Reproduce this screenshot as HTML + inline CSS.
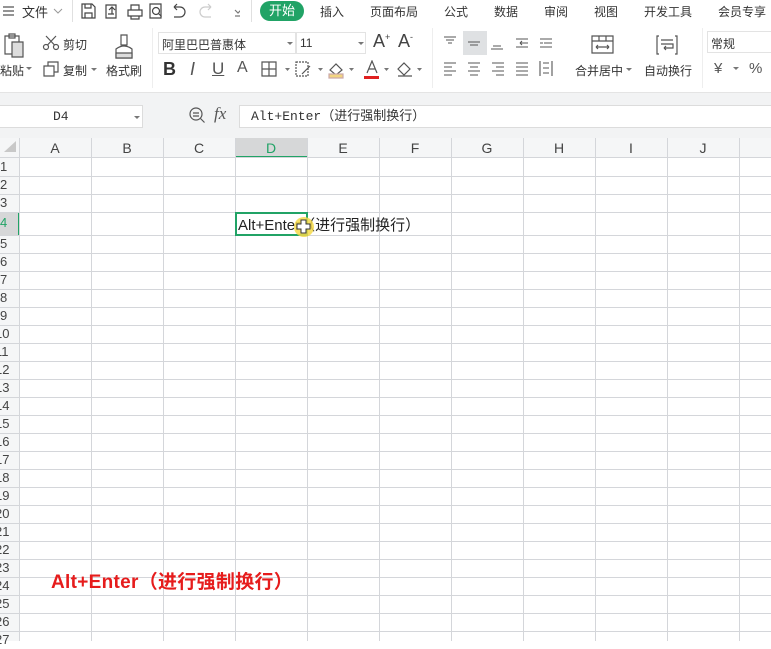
<!DOCTYPE html>
<html><head><meta charset="utf-8"><style>
*{margin:0;padding:0;box-sizing:border-box}
body{width:771px;height:641px;overflow:hidden;background:#fff;font-family:"Liberation Sans","Noto Sans CJK SC",sans-serif;font-size:12px;color:#333;position:relative}
.a{position:absolute;white-space:nowrap}
.ic{position:absolute}
.col{position:absolute;top:138px;height:20px;line-height:20px;text-align:center;font-size:14px;color:#444}
.rn{position:absolute;left:0;width:19px;text-align:left;font-size:13px;color:#444;line-height:18px;overflow:hidden}
</style></head><body>
<div class="a" style="left:0;top:0;width:771px;height:22px;background:#fff"></div>
<svg class="ic" style="left:2px;top:5px" width="14" height="12"><path d="M1 2h11M1 6h11M1 10h11" stroke="#555" stroke-width="1.2"/></svg>
<div class="a" style="left:22px;top:2px;font-size:13px">文件</div>
<svg class="ic" style="left:53px;top:7px" width="10" height="8"><path d="M1 2l4 4 4-4" stroke="#999" fill="none"/></svg>
<div class="a" style="left:72px;top:0;width:1px;height:22px;background:#e0e0e0"></div>
<svg class="ic" style="left:80px;top:2px" width="160" height="18" fill="none" stroke="#444" stroke-width="1.2">
<path d="M2 2h10l3 3v11H2zM5 2v4h6V2M5 16v-5h7v5"/>
<path d="M26 3h10v13H26zM29 8l3-3 3 3M32 5v7M28 12h6"/>
<path d="M48 8h14v6H48zM51 8V3h8v5M51 14v3h8v-3"/>
<path d="M70 2h11v14H70z"/><circle cx="76" cy="9" r="3.5"/><path d="M78.5 11.5l3 3"/>
<path d="M94 5h6a5 5 0 0 1 0 10h-6M94 5l3-3M94 5l3 3"/>
<path stroke="#ccc" d="M131 5h-6a5 5 0 0 0 0 10h6M131 5l-3-3M131 5l-3 3"/>
<path stroke="#777" d="M155 8l3 3 3-3M155 14h6"/>
</svg>
<div class="a" style="left:251px;top:0;width:1px;height:22px;background:#e0e0e0"></div>
<div class="a" style="left:260px;top:1px;width:44px;height:20px;border-radius:10px;background:#21a366;color:#fff;font-size:13px;line-height:20px;text-align:center">开始</div>
<div class="a" style="left:320px;top:3px">插入</div>
<div class="a" style="left:370px;top:3px">页面布局</div>
<div class="a" style="left:444px;top:3px">公式</div>
<div class="a" style="left:494px;top:3px">数据</div>
<div class="a" style="left:544px;top:3px">审阅</div>
<div class="a" style="left:594px;top:3px">视图</div>
<div class="a" style="left:644px;top:3px">开发工具</div>
<div class="a" style="left:718px;top:3px">会员专享</div>
<svg class="ic" style="left:2px;top:32px" width="24" height="28" fill="none" stroke="#555" stroke-width="1.2"><path d="M3 4h14v18H3z"/><path d="M7 2h6v4H7z"/><path d="M10 10h11v15H10z" fill="#ddd"/></svg>
<div class="a" style="left:0;top:62px">粘贴</div>
<svg class="ic" style="left:26px;top:67px" width="6" height="4"><path d="M0 0h6L3 3z" fill="#777"/></svg>
<svg class="ic" style="left:42px;top:35px" width="18" height="16" fill="none" stroke="#555" stroke-width="1.2"><circle cx="4" cy="12" r="2.5"/><circle cx="14" cy="12" r="2.5"/><path d="M5.5 10L14 1M12.5 10L4 1"/></svg>
<div class="a" style="left:63px;top:36px">剪切</div>
<svg class="ic" style="left:43px;top:61px" width="16" height="16" fill="none" stroke="#555" stroke-width="1.2"><path d="M1 5h10v10H1zM5 5V1h10v10h-4"/></svg>
<div class="a" style="left:63px;top:62px">复制</div>
<svg class="ic" style="left:91px;top:68px" width="6" height="4"><path d="M0 0h6L3 3z" fill="#777"/></svg>
<svg class="ic" style="left:113px;top:33px" width="22" height="28" fill="none" stroke="#555" stroke-width="1.2"><path d="M8 2h6v10H8zM3 16q8-6 16 0v9H3z"/><path d="M3 20h16v5H3z" fill="#ddd"/></svg>
<div class="a" style="left:106px;top:62px">格式刷</div>
<div class="a" style="left:152px;top:28px;width:1px;height:60px;background:#eee"></div>
<div class="a" style="left:158px;top:32px;width:138px;height:22px;border:1px solid #e3e3e3;padding:3px 3px">阿里巴巴普惠体</div>
<svg class="ic" style="left:287px;top:42px" width="6" height="4"><path d="M0 0h6L3 3z" fill="#777"/></svg>
<div class="a" style="left:296px;top:32px;width:70px;height:22px;border:1px solid #e3e3e3;padding:3px 3px">11</div>
<svg class="ic" style="left:358px;top:42px" width="6" height="4"><path d="M0 0h6L3 3z" fill="#777"/></svg>
<div class="a" style="left:373px;top:31px;font-size:18px;color:#444">A<sup style="font-size:9px">+</sup></div>
<div class="a" style="left:398px;top:31px;font-size:18px;color:#444">A<sup style="font-size:9px">-</sup></div>
<div class="a" style="left:163px;top:59px;font-size:18px;font-weight:bold;color:#333">B</div>
<div class="a" style="left:190px;top:59px;font-size:18px;font-style:italic;color:#555">I</div>
<div class="a" style="left:212px;top:59px;font-size:17px;color:#555;text-decoration:underline">U</div>
<div class="a" style="left:237px;top:59px;font-size:16px;color:#555">A</div>
<svg class="ic" style="left:260px;top:60px" width="170" height="20" fill="none" stroke="#555" stroke-width="1.2">
<path d="M2 2h14v14H2zM9 2v14M2 9h14"/><path d="M25 8h5l-2.5 3z" fill="#777" stroke="none"/>
<path d="M36 2h12v14H36z" stroke-dasharray="2 1"/><path d="M42 14l8-8"/><path d="M58 8h5l-2.5 3z" fill="#777" stroke="none"/>
<path d="M70 10l6-6 6 6-6 5z"/><path d="M69 14h14v4H69z" fill="#f2d580" stroke="#caa"/><path d="M89 8h5l-2.5 3z" fill="#777" stroke="none"/>
<path d="M107 13l5-12 5 12M109 9h6"/><path d="M104 16h15v3h-15z" fill="#e02020" stroke="none"/><path d="M124 8h5l-2.5 3z" fill="#777" stroke="none"/>
<path d="M138 9l6-6 6 6-6 6zM138 16h14"/><path d="M157 8h5l-2.5 3z" fill="#777" stroke="none"/>
</svg>
<div class="a" style="left:432px;top:28px;width:1px;height:60px;background:#eee"></div>
<div class="a" style="left:463px;top:31px;width:24px;height:24px;background:#dfe1e3"></div>
<svg class="ic" style="left:440px;top:33px" width="124" height="46" fill="none" stroke="#555" stroke-width="1.1">
<path d="M4 4h12M6 7h8M8 10h4"/><path d="M28 9h12M30 12h8"/><path d="M53 13h8M51 16h12"/>
<path d="M76 6h12M80 10h8M76 14h12M80 10l2-2M80 10l2 2"/><path d="M100 6h12M104 10h8M100 14h12M100 10h3"/>
<path d="M4 30h12M4 34h8M4 38h12M4 42h8"/><path d="M28 30h12M30 34h8M28 38h12M30 42h8"/><path d="M52 30h12M56 34h8M52 38h12M56 42h8"/><path d="M76 30h12M76 34h12M76 38h12M76 42h12"/><path d="M100 28v15M112 28v15M103 30h6M103 35h6M103 40h6"/>
</svg>
<svg class="ic" style="left:590px;top:34px" width="26" height="22" fill="none" stroke="#555" stroke-width="1.2"><path d="M2 2h21v17H2zM2 7h21M9 2v5M16 2v5M6 13h13M6 13l2-2M6 13l2 2M19 13l-2-2M19 13l-2 2"/></svg>
<div class="a" style="left:575px;top:62px">合并居中</div>
<svg class="ic" style="left:626px;top:68px" width="6" height="4"><path d="M0 0h6L3 3z" fill="#777"/></svg>
<svg class="ic" style="left:655px;top:34px" width="24" height="22" fill="none" stroke="#555" stroke-width="1.2"><path d="M4 2H2v18h2M20 2h2v18h-2M6 6h12M6 10h12v4h-9M9 14l2-2M9 14l2 2"/></svg>
<div class="a" style="left:644px;top:62px">自动换行</div>
<div class="a" style="left:702px;top:28px;width:1px;height:60px;background:#eee"></div>
<div class="a" style="left:707px;top:31px;width:70px;height:22px;border:1px solid #e3e3e3;padding:3px 3px">常规</div>
<div class="a" style="left:714px;top:60px;font-size:15px;color:#555">¥</div>
<svg class="ic" style="left:733px;top:67px" width="6" height="4"><path d="M0 0h6L3 3z" fill="#777"/></svg>
<div class="a" style="left:749px;top:60px;font-size:15px;color:#555">%</div>
<div class="a" style="left:0;top:92px;width:771px;height:46px;background:#f2f3f4;border-top:1px solid #e4e4e4"></div>
<div class="a" style="left:-2px;top:105px;width:145px;height:23px;background:#fff;border:1px solid #dcdcdc;font-family:'Liberation Mono',monospace;font-size:13px;line-height:21px;padding-left:54px">D4</div>
<svg class="ic" style="left:134px;top:116px" width="6" height="4"><path d="M0 0h6L3 3z" fill="#777"/></svg>
<svg class="ic" style="left:188px;top:106px" width="18" height="18" fill="none" stroke="#555" stroke-width="1.2"><circle cx="8" cy="8" r="6"/><path d="M12.5 12.5l4 4M5 7h6M5 10h6"/></svg>
<div class="a" style="left:214px;top:104px;font-family:'Liberation Serif',serif;font-style:italic;font-size:17px;color:#555">fx</div>
<div class="a" style="left:239px;top:105px;width:540px;height:23px;background:#fff;border:1px solid #dcdcdc;font-family:'Liberation Mono','Noto Sans CJK SC',monospace;font-size:13px;line-height:21px;padding-left:11px">Alt+Enter（进行强制换行）</div>
<svg class="ic" style="left:0;top:138px" width="771" height="503">
<rect x="0" y="0" width="771" height="20" fill="#f5f6f7"/>
<rect x="0" y="20" width="19" height="483" fill="#f5f6f7"/>
<rect x="235" y="0" width="72" height="19" fill="#d6d7d8"/>
<rect x="235" y="18" width="72" height="2" fill="#21a366"/>
<rect x="0" y="74" width="19" height="23" fill="#d6d7d8"/>
<rect x="18" y="74" width="2" height="23" fill="#21a366"/>
<path d="M4 14L16 3v11z" fill="#c8c8c8"/>
<g stroke="#d4d6da" stroke-width="1">
<path d="M0 19.5H771M19.5 0V503"/>
<path d="M91.5 0V503M163.5 0V503M235.5 0V503M307.5 0V503M379.5 0V503M451.5 0V503M523.5 0V503M595.5 0V503M667.5 0V503M739.5 0V503"/>
<path d="M0 38.5H771M0 56.5H771M0 74.5H771M0 97.5H771M0 115.5H771M0 133.5H771M0 151.5H771M0 169.5H771M0 187.5H771M0 205.5H771M0 223.5H771M0 241.5H771M0 259.5H771M0 277.5H771M0 295.5H771M0 313.5H771M0 331.5H771M0 349.5H771M0 367.5H771M0 385.5H771M0 403.5H771M0 421.5H771M0 439.5H771M0 457.5H771M0 475.5H771M0 493.5H771"/>
</g>
<rect x="236" y="75" width="71" height="22" fill="none" stroke="#21a366" stroke-width="2"/>
</svg>
<div class="col" style="left:19px;width:72px">A</div>
<div class="col" style="left:91px;width:72px">B</div>
<div class="col" style="left:163px;width:72px">C</div>
<div class="col" style="left:235px;width:72px;color:#21a366">D</div>
<div class="col" style="left:307px;width:72px">E</div>
<div class="col" style="left:379px;width:72px">F</div>
<div class="col" style="left:451px;width:72px">G</div>
<div class="col" style="left:523px;width:72px">H</div>
<div class="col" style="left:595px;width:72px">I</div>
<div class="col" style="left:667px;width:72px">J</div>
<div class="rn" style="top:158px">1</div>
<div class="rn" style="top:176px">2</div>
<div class="rn" style="top:194px">3</div>
<div class="rn" style="top:214px;color:#21a366">4</div>
<div class="rn" style="top:235px">5</div><div class="rn" style="top:253px">6</div><div class="rn" style="top:271px">7</div><div class="rn" style="top:289px">8</div><div class="rn" style="top:307px">9</div>
<div class="rn" style="top:325px;text-indent:-5px">10</div><div class="rn" style="top:343px;text-indent:-5px">11</div><div class="rn" style="top:361px;text-indent:-5px">12</div><div class="rn" style="top:379px;text-indent:-5px">13</div><div class="rn" style="top:397px;text-indent:-5px">14</div><div class="rn" style="top:415px;text-indent:-5px">15</div><div class="rn" style="top:433px;text-indent:-5px">16</div><div class="rn" style="top:451px;text-indent:-5px">17</div><div class="rn" style="top:469px;text-indent:-5px">18</div><div class="rn" style="top:487px;text-indent:-5px">19</div><div class="rn" style="top:505px;text-indent:-5px">20</div><div class="rn" style="top:523px;text-indent:-5px">21</div><div class="rn" style="top:541px;text-indent:-5px">22</div><div class="rn" style="top:559px;text-indent:-5px">23</div><div class="rn" style="top:577px;text-indent:-5px">24</div><div class="rn" style="top:595px;text-indent:-5px">25</div><div class="rn" style="top:613px;text-indent:-5px">26</div><div class="rn" style="top:631px;text-indent:-5px">27</div>
<div class="a" style="left:238px;top:214px;font-size:15px;color:#222">Alt+Enter（进行强制换行）</div>
<svg class="ic" style="left:292px;top:215px" width="24" height="24"><circle cx="12" cy="12" r="10" fill="#f5d94a" opacity="0.85"/><path d="M9 5h5v4h4v5h-4v4H9v-4H5V9h4z" fill="#fff" stroke="#333" stroke-width="1"/></svg>
<div class="a" style="left:51px;top:567px;font-size:19px;font-weight:bold;color:#e61c1c;letter-spacing:0.3px">Alt+Enter（进行强制换行）</div>
</body></html>
